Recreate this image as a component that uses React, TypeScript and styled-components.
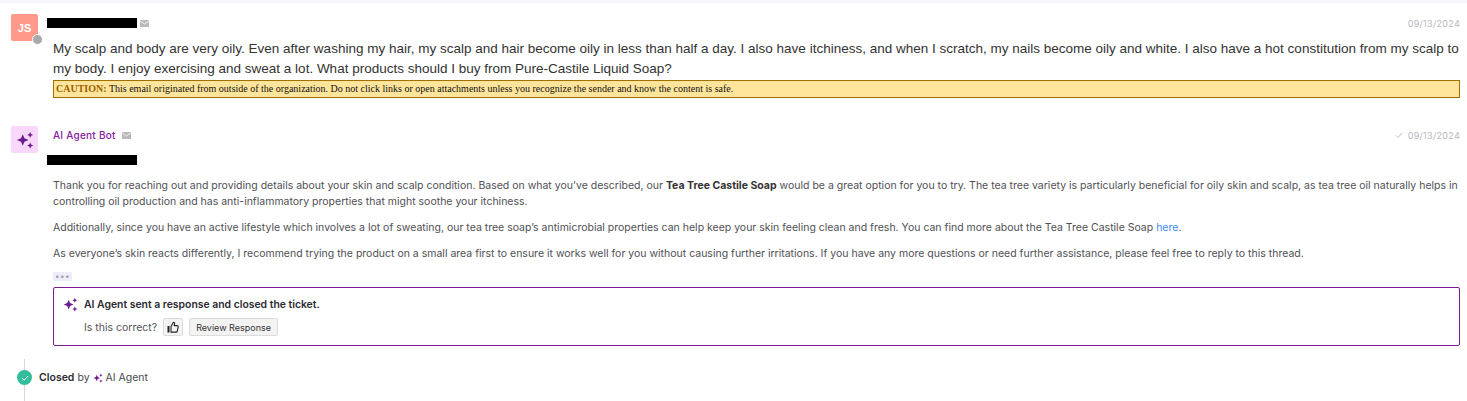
import React from "react";
import styled, { createGlobalStyle } from "styled-components";

const GlobalStyle = createGlobalStyle`
  html, body {
    margin: 0;
    padding: 0;
    background: #fff;
    overflow: hidden;
  }
  body {
    font-family: Inter, "Liberation Sans", sans-serif;
    color: #333;
  }
`;

const Page = styled.div`
  width: 1467px;
  height: 401px;
  border-top: 3px solid #f6f5f9;
  box-sizing: border-box;
  overflow: hidden;
`;

const Message = styled.div<{ $top: number }>`
  display: flex;
  gap: 15px;
  padding: ${(p) => p.$top}px 7px 0 11px;
`;

const Avatar = styled.div<{ $bg: string }>`
  position: relative;
  flex: none;
  width: 27px;
  height: 27px;
  border-radius: 2px;
  background: ${(p) => p.$bg};
  color: #fff;
  font: 700 11px "Liberation Sans", sans-serif;
  display: flex;
  align-items: center;
  justify-content: center;
`;

const StatusDot = styled.span`
  position: absolute;
  right: -5px;
  bottom: -4px;
  width: 9px;
  height: 9px;
  border-radius: 50%;
  background: #a9a9ad;
  border: 1px solid #fff;
`;

const Main = styled.div`
  flex: 1;
  min-width: 0;
  margin-top: 2px;
`;

const Header = styled.div`
  display: flex;
  align-items: center;
  height: 14px;
  font-size: 10px;
`;

const Redacted = styled.div<{ $top?: number; $bottom?: number }>`
  width: 90px;
  height: 10px;
  margin: ${(p) => p.$top ?? 0}px 0 ${(p) => p.$bottom ?? 0}px -6px;
  background: #000;
`;

const Sender = styled.span`
  color: #86209f;
  font-size: 10px;
  font-weight: 500;
  letter-spacing: 0.25px;
  margin-right: 3px;
`;

const MailIcon = styled.svg`
  width: 9px;
  height: 7px;
  margin-left: 3px;
`;

const Stamp = styled.span`
  margin-left: auto;
  display: inline-flex;
  align-items: center;
  gap: 5px;
  color: #b8b8bd;
  font-size: 9px;
  letter-spacing: 0.3px;
`;

const CustomerText = styled.p`
  margin: 9px 0 0;
  font: 13.5px/20px "Liberation Sans", sans-serif;
  color: #333;
`;

const Caution = styled.div`
  height: 18px;
  margin-top: 1px;
  box-sizing: border-box;
  border: 1px solid #a56f00;
  background: #ffe59b;
  padding-left: 2px;
  font: 10px/16px "Liberation Serif", serif;
  color: #111;
`;

const CautionLabel = styled.b`
  color: #9c5f00;
`;

const Body = styled.div`
  font-size: 10.5px;
  line-height: 16px;
  color: #505055;
`;

const Para = styled.p`
  margin: 0 0 10px;

  b {
    color: #333;
    font-weight: 700;
  }
  a {
    color: #3b8bff;
    text-decoration: none;
  }
`;

const More = styled.div`
  width: 19px;
  height: 9px;
  border-radius: 1px;
  background: #eeeefa;
  color: #9c9cb0;
  font-size: 8px;
  line-height: 8px;
  text-align: center;
  letter-spacing: 0.5px;
  margin: 10px 0 6px;
`;

const Notice = styled.div`
  border: 1px solid #7b1a96;
  border-radius: 2px;
  height: 59px;
  box-sizing: border-box;
  padding: 9px 0 0 9px;
  display: flex;
  flex-direction: column;
  gap: 6px;
`;

const NoticeTitle = styled.div`
  display: flex;
  align-items: center;
  gap: 6px;
  font-size: 10.4px;
  font-weight: 600;
  color: #2b2b30;
`;

const NoticeRow = styled.div`
  display: flex;
  align-items: center;
  gap: 6px;
  padding-left: 21px;
  font-size: 10.5px;
  color: #55555a;
`;

const IconButton = styled.button`
  width: 20px;
  height: 18px;
  padding: 0;
  display: flex;
  align-items: center;
  justify-content: center;
  background: #f3f3f4;
  border: 1px solid #dcdcde;
  border-radius: 2px;
`;

const TextButton = styled.button`
  height: 18px;
  padding: 0 6px;
  background: #f3f3f4;
  border: 1px solid #dcdcde;
  border-radius: 2px;
  font: 400 9px Inter, sans-serif;
  color: #333;
`;

const Timeline = styled.div`
  margin: 13px 0 0 24px;
  width: 1px;
  height: 60px;
  background: #d8d8da;
  position: relative;
`;

const Event = styled.div`
  position: absolute;
  left: -7px;
  top: 11px;
  display: flex;
  align-items: center;
  white-space: nowrap;
  font-size: 10.5px;
  color: #4a4a4f;
`;

const CheckDot = styled.span`
  width: 15px;
  height: 15px;
  border-radius: 50%;
  background: #32bd9b;
  display: flex;
  align-items: center;
  justify-content: center;
  margin-right: 7px;
`;

const EventStrong = styled.b`
  font-weight: 600;
  color: #2b2b30;
  margin-right: 3px;
`;

const Sparkle: React.FC<{ size: number }> = ({ size }) => (
  <svg width={size} height={size} viewBox="0 0 16 16" fill="#6a1b8f">
    <path d="M6 2.8 7.5 6.5 11.2 8 7.5 9.5 6 13.2 4.5 9.5.8 8 4.5 6.5z" />
    <path d="M12.6 .8l.8 1.9 1.9.8-1.9.8-.8 1.9-.8-1.9-1.9-.8 1.9-.8z" />
    <path d="M12.6 10.2l.8 1.9 1.9.8-1.9.8-.8 1.9-.8-1.9-1.9-.8 1.9-.8z" />
  </svg>
);

const Mail = () => (
  <MailIcon viewBox="0 0 9 7">
    <rect width="9" height="7" fill="#b9b9bd" />
    <path d="M0 .8 4.5 4 9 .8" fill="none" stroke="#fff" strokeWidth=".8" />
  </MailIcon>
);

const ThumbUp = () => (
  <svg width="12" height="12" viewBox="0 0 12 12" fill="none">
    <rect x="0.5" y="5" width="2" height="6.5" fill="#222" />
    <path
      d="M4 5.4 6.4 1.2c.8 0 1.3.6 1.2 1.4L7.2 4.6h3c.7 0 1.2.6 1 1.3l-1 4.4c-.1.5-.5.8-1 .8H4z"
      stroke="#222"
      strokeWidth="1.1"
      strokeLinejoin="round"
    />
  </svg>
);

const App: React.FC = () => (
  <Page>
    <GlobalStyle />
    <Message $top={11}>
      <Avatar $bg="#ff9a8b">
        JS
        <StatusDot />
      </Avatar>
      <Main>
        <Header>
          <Redacted />
          <Mail />
          <Stamp>09/13/2024</Stamp>
        </Header>
        <CustomerText>
          My scalp and body are very oily. Even after washing my hair, my scalp and hair become oily in less than half a
          day. I also have itchiness, and when I scratch, my nails become oily and white. I also have a hot constitution
          from my scalp to my body. I enjoy exercising and sweat a lot. What products should I buy from Pure-Castile
          Liquid Soap?
        </CustomerText>
        <Caution>
          <CautionLabel>CAUTION:</CautionLabel> This email originated from outside of the organization. Do not click
          links or open attachments unless you recognize the sender and know the content is safe.
        </Caution>
      </Main>
    </Message>
    <Message $top={28}>
      <Avatar $bg="#f8d7fb">
        <Sparkle size={18} />
      </Avatar>
      <Main>
        <Header>
          <Sender>AI Agent Bot</Sender>
          <Mail />
          <Stamp>
            <svg width="8" height="8" viewBox="0 0 8 8" fill="none" stroke="#bdbdc2">
              <path d="M1 4.5 3 6.5 7 2" />
            </svg>
            09/13/2024
          </Stamp>
        </Header>
        <Redacted $top={13} $bottom={13} />
        <Body>
          <Para>
            Thank you for reaching out and providing details about your skin and scalp condition. Based on what you’ve
            described, our <b>Tea Tree Castile Soap</b> would be a great option for you to try. The tea tree variety is
            particularly beneficial for oily skin and scalp, as tea tree oil naturally helps in controlling oil
            production and has anti-inflammatory properties that might soothe your itchiness.
          </Para>
          <Para>
            Additionally, since you have an active lifestyle which involves a lot of sweating, our tea tree soap’s
            antimicrobial properties can help keep your skin feeling clean and fresh. You can find more about the Tea
            Tree Castile Soap <a href="#here">here</a>.
          </Para>
          <Para>
            As everyone’s skin reacts differently, I recommend trying the product on a small area first to ensure it
            works well for you without causing further irritations. If you have any more questions or need further
            assistance, please feel free to reply to this thread.
          </Para>
        </Body>
        <More>•••</More>
        <Notice>
          <NoticeTitle>
            <Sparkle size={15} />
            AI Agent sent a response and closed the ticket.
          </NoticeTitle>
          <NoticeRow>
            Is this correct?
            <IconButton aria-label="Thumbs up">
              <ThumbUp />
            </IconButton>
            <TextButton>Review Response</TextButton>
          </NoticeRow>
        </Notice>
      </Main>
    </Message>
    <Timeline>
      <Event>
        <CheckDot>
          <svg width="8" height="8" viewBox="0 0 8 8" fill="none" stroke="#fff">
            <path d="M1 4.2 3.2 6.2 7 2" />
          </svg>
        </CheckDot>
        <EventStrong>Closed</EventStrong>
        by&nbsp;
        <Sparkle size={10} />
        &nbsp;AI Agent
      </Event>
    </Timeline>
  </Page>
);

export default App;
